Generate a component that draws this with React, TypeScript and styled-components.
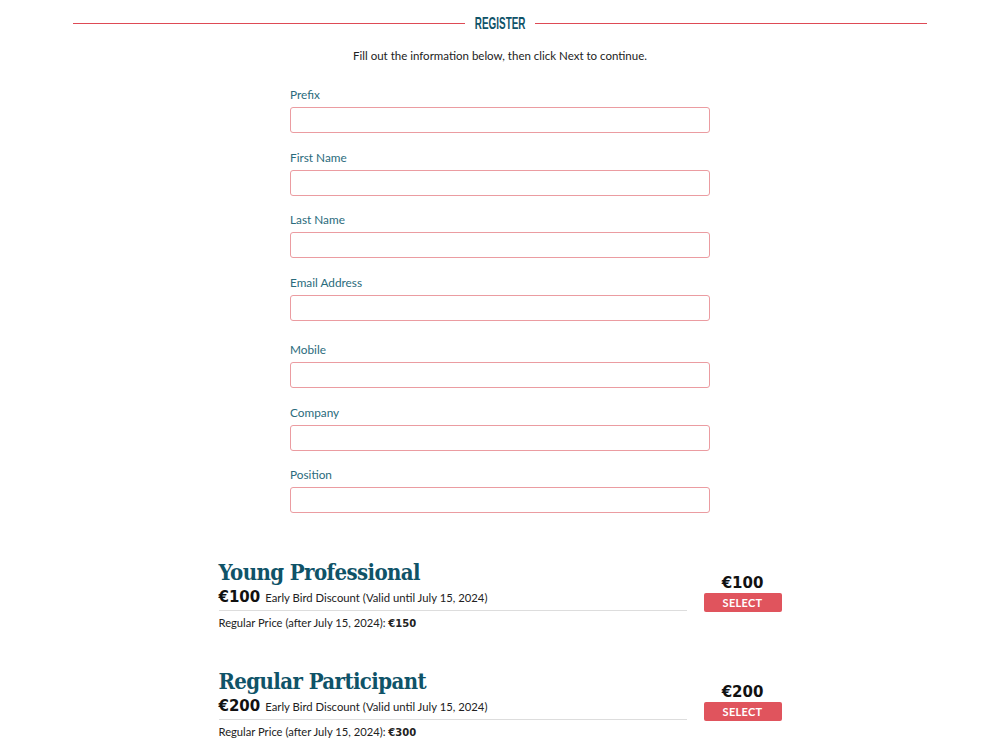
import React from 'react'
import styled, { createGlobalStyle } from 'styled-components'

const GlobalStyle = createGlobalStyle`
  body {
    margin: 0;
    background: #fff;
    font-family: Lato, 'Open Sans', sans-serif;
    color: #222;
  }
  * { box-sizing: border-box; }
`

const Page = styled.div`
  width: 1000px;
  padding: 14px 73px 0;
`

const TitleRow = styled.div`
  display: flex;
  align-items: center;
  gap: 10px;
  height: 18px;
`

const Rule = styled.div`
  flex: 1;
  height: 1px;
  background: #de4a55;
`

// condensed caps: the font is squeezed horizontally inside a fixed box
const Heading = styled.h2`
  margin: 0;
  width: 50px;
  display: flex;
  justify-content: center;
  font-family: 'Liberation Sans', Arial, sans-serif;
  font-weight: 700;
  font-size: 16.5px;
  color: #0f5368;
  text-transform: uppercase;
  white-space: nowrap;

  span {
    display: inline-block;
    transform: scaleX(0.6);
  }
`

const Intro = styled.p`
  margin: 17px 0 0;
  text-align: center;
  font-size: 11.5px;
  color: #222;
`

const Form = styled.form`
  width: 420px;
  margin: 26px auto 0;
  display: flex;
  flex-direction: column;
`

const Field = styled.div<{ $extra?: number }>`
  display: flex;
  flex-direction: column;
  gap: 5px;
  margin-bottom: ${(p) => 17.5 + (p.$extra || 0)}px;
`

const Label = styled.label`
  font-size: 11.8px;
  color: #2a6b7c;
  line-height: 14px;
`

const Input = styled.input`
  height: 26px;
  border: 1px solid #eb9ca1;
  border-radius: 3px;
  outline: none;
  padding: 0 8px;
  background: #fff;
`

const Plans = styled.div`
  width: 563px;
  margin: 26px auto 0;
  display: flex;
  flex-direction: column;
  gap: 37px;
`

const Plan = styled.div`
  display: flex;
  align-items: flex-start;
  gap: 17px;
`

const PlanInfo = styled.div`
  flex: 0 0 468px;
`

const PlanName = styled.h3`
  margin: 0;
  font-family: 'DejaVu Serif', 'Liberation Serif', serif;
  font-stretch: condensed;
  font-weight: 700;
  font-size: 22px;
  letter-spacing: -0.6px;
  line-height: 31px;
  color: #0f5368;
`

const EarlyLine = styled.div`
  display: flex;
  align-items: baseline;
  gap: 5px;
  font-size: 11.3px;
  padding-bottom: 4px;
  border-bottom: 1px solid #ddd;
`

const Amount = styled.span<{ $size?: number }>`
  font-family: 'DejaVu Sans', sans-serif;
  font-weight: 700;
  font-size: ${(p) => p.$size || 15}px;
  color: #111;
`

const RegularLine = styled.div`
  font-size: 11.2px;
  margin-top: 5px;
  b {
    font-family: 'DejaVu Sans', sans-serif;
    font-size: 10px;
  }
`

const Side = styled.div`
  width: 78px;
  margin-top: 17px;
  display: flex;
  flex-direction: column;
  align-items: center;
  gap: 1px;
`

const SelectButton = styled.button`
  width: 78px;
  height: 19px;
  border: none;
  border-radius: 2px;
  background: #e0545d;
  color: #fff;
  font-family: Lato, sans-serif;
  font-weight: 700;
  font-size: 11px;
  letter-spacing: 0.3px;
  cursor: pointer;
`

const fields = [
  { label: 'Prefix' },
  { label: 'First Name' },
  { label: 'Last Name' },
  { label: 'Email Address', extra: 5 },
  { label: 'Mobile' },
  { label: 'Company' },
  { label: 'Position' },
]

const plans = [
  { name: 'Young Professional', early: 100, regular: 150 },
  { name: 'Regular Participant', early: 200, regular: 300 },
]

export default function App() {
  return (
    <>
      <GlobalStyle />
      <Page>
        <TitleRow>
          <Rule />
          <Heading>
            <span>Register</span>
          </Heading>
          <Rule />
        </TitleRow>
        <Intro>Fill out the information below, then click Next to continue.</Intro>
        <Form>
          {fields.map((f) => (
            <Field key={f.label} $extra={f.extra}>
              <Label>{f.label}</Label>
              <Input type="text" />
            </Field>
          ))}
        </Form>
        <Plans>
          {plans.map((p) => (
            <Plan key={p.name}>
              <PlanInfo>
                <PlanName>{p.name}</PlanName>
                <EarlyLine>
                  <Amount>€{p.early}</Amount>
                  Early Bird Discount (Valid until July 15, 2024)
                </EarlyLine>
                <RegularLine>
                  Regular Price (after July 15, 2024): <b>€{p.regular}</b>
                </RegularLine>
              </PlanInfo>
              <Side>
                <Amount $size={15}>€{p.early}</Amount>
                <SelectButton type="button">SELECT</SelectButton>
              </Side>
            </Plan>
          ))}
        </Plans>
      </Page>
    </>
  )
}
